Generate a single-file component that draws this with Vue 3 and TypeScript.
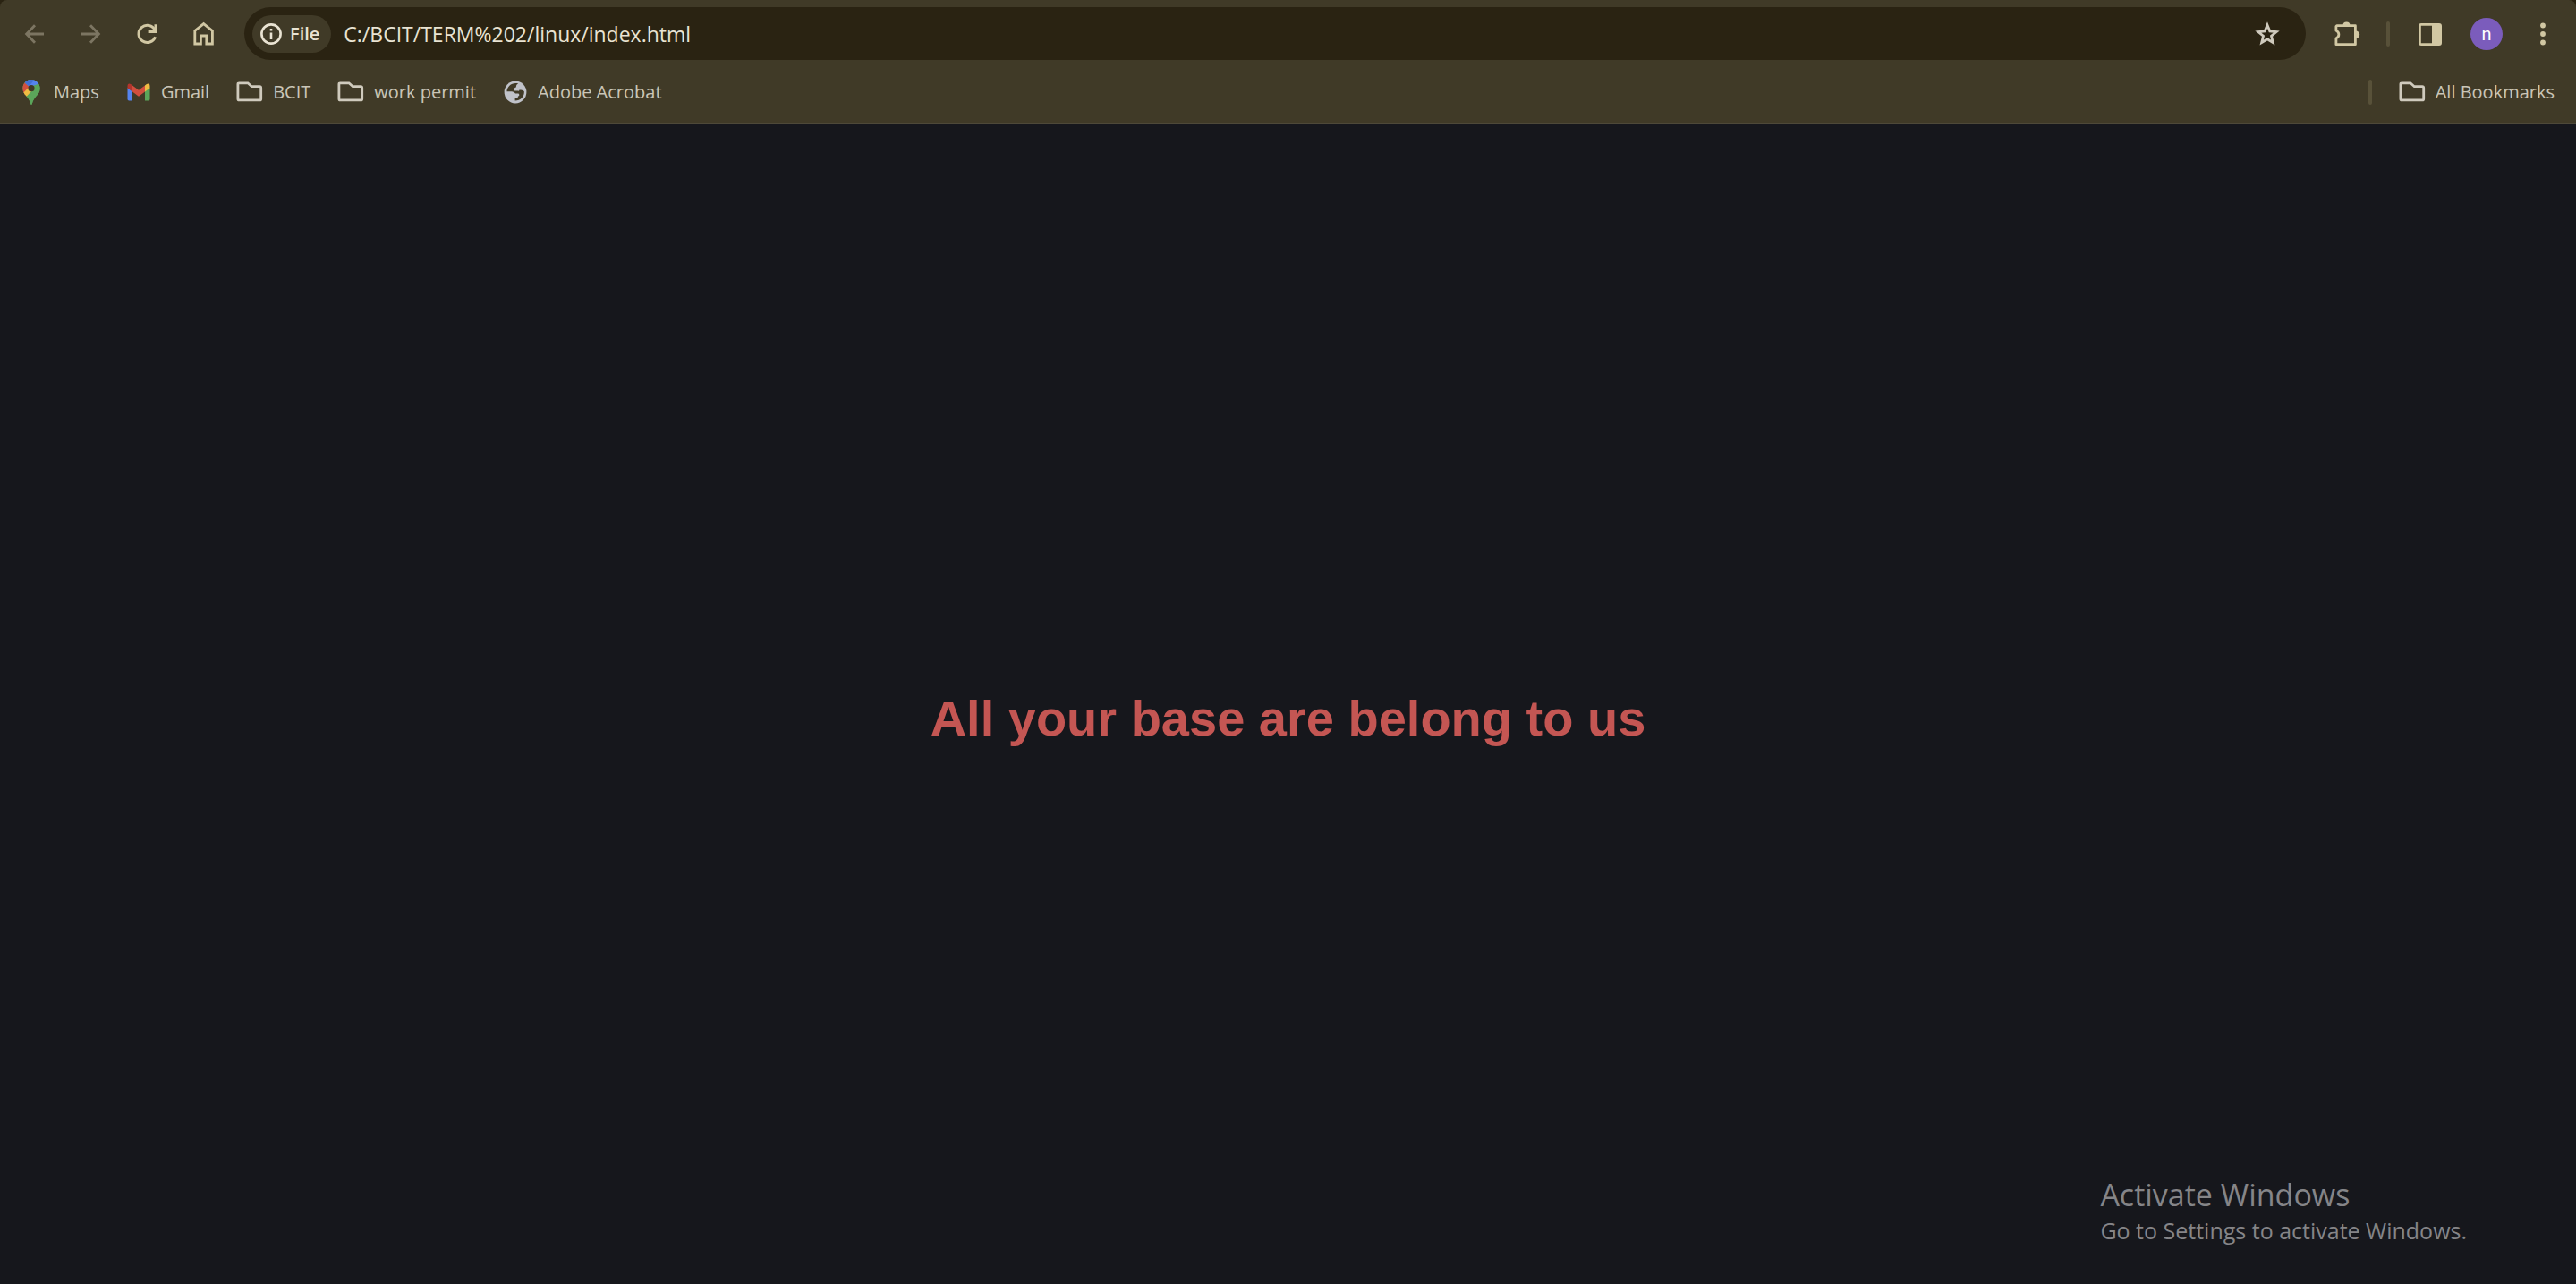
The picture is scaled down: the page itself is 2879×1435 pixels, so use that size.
<script setup lang="ts">
import { ref } from 'vue'

type IconKind = 'maps' | 'gmail' | 'folder' | 'globe'

interface Bookmark {
  label: string
  icon: IconKind
}

const address = ref('C:/BCIT/TERM%202/linux/index.html')

const bookmarks: Bookmark[] = [
  { label: 'Maps', icon: 'maps' },
  { label: 'Gmail', icon: 'gmail' },
  { label: 'BCIT', icon: 'folder' },
  { label: 'work permit', icon: 'folder' },
  { label: 'Adobe Acrobat', icon: 'globe' },
]
</script>

<template>
  <div class="window">
    <header class="chrome">
      <div class="toolbar">
        <button class="tool dim" type="button" aria-label="Back" disabled>
          <svg width="36" height="36" viewBox="0 0 36 36" fill="none" stroke="currentColor" stroke-width="2.8">
            <path d="M28 18H9M18 8.2L8.6 18L18 27.8" />
          </svg>
        </button>
        <button class="tool dim" type="button" aria-label="Forward" disabled>
          <svg width="36" height="36" viewBox="0 0 36 36" fill="none" stroke="currentColor" stroke-width="2.8">
            <path d="M7 18H27M17 8.2L26.4 18L17 27.8" />
          </svg>
        </button>
        <button class="tool" type="button" aria-label="Reload">
          <svg width="36" height="36" viewBox="0 0 36 36" fill="none" stroke="currentColor" stroke-width="3">
            <path d="M26.6 21.2A9.6 9.6 0 1 1 26.2 13.6" />
            <path d="M27 7.2V15.6H18.6" />
          </svg>
        </button>
        <button class="tool" type="button" aria-label="Home">
          <svg width="36" height="36" viewBox="0 0 36 36" fill="none" stroke="currentColor" stroke-width="2.8">
            <path d="M7.8 29V14.4L17.6 6.6L27.4 14.4V29H20.8V20H14.4V29Z" />
          </svg>
        </button>

        <div class="omnibox">
          <button class="chip" type="button">
            <svg width="24" height="24" viewBox="0 0 24 24" fill="none" stroke="currentColor">
              <circle cx="12" cy="12" r="10.6" stroke-width="2.6" />
              <path d="M12 10.4V18M12 6V8.6" stroke-width="2.6" />
            </svg>
            <span>File</span>
          </button>
          <input v-model="address" class="address" type="text" aria-label="Address" spellcheck="false" />
          <button class="star" type="button" aria-label="Bookmark this page">
            <svg width="30" height="30" viewBox="0 0 30 30" fill="none" stroke="currentColor" stroke-width="2.8">
              <path d="M15 5L17.8 11.9L25.2 12.5L19.5 17.3L21.3 24.6L15 20.7L8.7 24.6L10.5 17.3L4.8 12.5L12.2 11.9Z" />
            </svg>
          </button>
        </div>

        <button class="tool" type="button" aria-label="Extensions">
          <svg width="36" height="36" viewBox="0 0 36 36">
            <path
              d="M7.6 8.7H28.4V29.7H6.9V22.8A4.6 4.6 0 0 0 6.9 14.2V9.4Z"
              fill="none" stroke="currentColor" stroke-width="2.8" stroke-linejoin="round"
            />
            <path d="M14.5 8.4a4 4 0 0 1 8 0ZM29 14.6a4.2 4.2 0 0 1 0 8.4Z" fill="currentColor" />
          </svg>
        </button>
        <span class="divider"></span>
        <button class="tool" type="button" aria-label="Side panel">
          <svg width="36" height="36" viewBox="0 0 36 36">
            <rect x="6.4" y="7.4" width="23.2" height="22.2" rx="1.6" fill="none" stroke="currentColor" stroke-width="2.8" />
            <path d="M20 7h9v23h-9z" fill="currentColor" />
          </svg>
        </button>
        <button class="avatar" type="button" aria-label="Profile">n</button>
        <button class="tool" type="button" aria-label="Menu">
          <svg width="36" height="36" viewBox="0 0 36 36" fill="currentColor">
            <circle cx="18" cy="8.5" r="2.9" />
            <circle cx="18" cy="18" r="2.9" />
            <circle cx="18" cy="27.5" r="2.9" />
          </svg>
        </button>
      </div>

      <nav class="bookmarks" aria-label="Bookmarks">
        <a v-for="item in bookmarks" :key="item.label" class="bookmark" href="#">
          <svg v-if="item.icon === 'maps'" width="28" height="28" viewBox="0 0 28 28">
            <clipPath id="pin">
              <path d="M14 0C8.4 0 4.4 4.3 4.4 9.7C4.4 13.5 6.3 16 8.6 18.6C11 21.3 12.2 23.6 13 26.5Q14 29.3 15 26.5C15.8 23.6 17 21.3 19.4 18.6C21.7 16 23.6 13.5 23.6 9.7C23.6 4.3 19.6 0 14 0Z" />
            </clipPath>
            <g clip-path="url(#pin)">
              <path d="M0 0h28v28H0z" fill="#5ba55a" />
              <path d="M6.7 3.5L14 9.7L4 20H0V0Z" fill="#d24f3f" />
              <path d="M12 7.5L4.4 15.5L8.6 19.5L18 9.7Z" fill="#efbc43" />
              <path d="M22.3 4.5L8.4 19L13 28H28V0Z" fill="#5ba55a" />
              <path d="M6.7 3.5L12 8L22.5 4.7L18 0H9Z" fill="#5583ee" />
              <path d="M6.7 3.5L11.5 7.5L17.5 0H9Z" fill="#4470d3" />
            </g>
            <circle cx="14" cy="9.7" r="3.6" fill="#403a27" />
          </svg>
          <svg v-else-if="item.icon === 'gmail'" width="28" height="28" viewBox="0 0 28 28">
            <path d="M1.5 9L7 13V23.5H3.2Q1.5 23.5 1.5 21.8Z" fill="#5583ee" />
            <path d="M26.5 9L21 13V23.5H24.8Q26.5 23.5 26.5 21.8Z" fill="#5ba55a" />
            <path d="M21 6.4L22.5 5.2Q26.5 3.2 26.5 7.5V9.5L21 13.5Z" fill="#efbc43" />
            <path d="M7 6.4L5.5 5.2Q1.5 3.2 1.5 7.5V9.5L7 13.5Z" fill="#b3352c" />
            <path d="M7 6.4L14 11.8L21 6.4V13.5L14 18.8L7 13.5Z" fill="#d24f3f" />
          </svg>
          <svg v-else-if="item.icon === 'folder'" width="30" height="28" viewBox="0 0 30 28">
            <path
              d="M1.9 5Q1.9 3.8 3.1 3.8H13L17.3 7.7H26.2Q27.7 7.7 27.7 9.2V21.4Q27.7 22.9 26.2 22.9H3.4Q1.9 22.9 1.9 21.4Z"
              fill="none" stroke="#cfcabd" stroke-width="2.8"
            />
          </svg>
          <svg v-else width="28" height="28" viewBox="0 0 28 28">
            <circle cx="14" cy="14" r="12.4" fill="#c0c2c9" />
            <path
              d="M17.3 4.5C14.8 5.4 15 7.2 14.8 8.4C12.6 8.8 12.2 10.8 13 12.6H17Q18.4 12.8 18.4 11.4H20.2Q22.4 11.4 23.8 13C24.4 18.6 19.8 23.6 13.6 23.6V20.6H15.6Q17 20.4 17 18.6C18.6 18.4 18.8 16.2 17.4 15.4H10.6V13.4H4.4C4.6 7.5 10.6 2.6 17.3 4.5Z"
              fill="#403a27"
            />
            <path d="M4 13.4H10.6Q13.8 13.6 14 16.6H11.4V19.4H8.6L4.6 17Z" fill="#c0c2c9" />
          </svg>
          <span>{{ item.label }}</span>
        </a>

        <span class="divider push"></span>
        <a class="bookmark" href="#">
          <svg width="30" height="28" viewBox="0 0 30 28">
            <path
              d="M1.9 5Q1.9 3.8 3.1 3.8H13L17.3 7.7H26.2Q27.7 7.7 27.7 9.2V21.4Q27.7 22.9 26.2 22.9H3.4Q1.9 22.9 1.9 21.4Z"
              fill="none" stroke="#cfcabd" stroke-width="2.8"
            />
          </svg>
          <span>All Bookmarks</span>
        </a>
      </nav>
    </header>

    <main class="page">
      <h1>All your base are belong to us</h1>
    </main>

    <aside class="watermark">
      <p class="watermark-title">Activate Windows</p>
      <p class="watermark-text">Go to Settings to activate Windows.</p>
    </aside>
  </div>
</template>

<style>
body {
  margin: 0;
  background: #16171c;
}
</style>

<style scoped>
.window {
  position: relative;
  display: flex;
  flex-direction: column;
  min-height: 100vh;
  background: #16171c;
  font-family: "Open Sans", "Noto Sans", sans-serif;
}

button {
  padding: 0;
  border: 0;
  background: none;
  color: inherit;
  font-family: inherit;
}

svg {
  display: block;
  flex: none;
}

.chrome {
  background: linear-gradient(#2a2312, #2a2312) top / 100% 8px no-repeat;
}

.toolbar {
  display: flex;
  align-items: center;
  gap: 27px;
  height: 75px;
  padding: 0 19px 0 21px;
  border-radius: 8px 8px 0 0;
  background: #403a27;
  color: #d1c7a3;
}

.tool {
  flex: none;
  width: 36px;
  height: 36px;
}

.dim {
  color: #7c7562;
}

.omnibox {
  display: flex;
  flex: 1;
  align-items: center;
  box-sizing: border-box;
  height: 59px;
  padding: 0 28px 0 9px;
  border-radius: 30px;
  background: #2a2312;
  color: #e9e3d3;
}

.chip {
  display: flex;
  flex: none;
  align-items: center;
  gap: 9px;
  height: 42px;
  padding: 0 13px 0 9px;
  border-radius: 21px;
  background: #403a27;
  font-size: 20px;
  font-weight: 600;
  line-height: 42px;
}

.address {
  flex: 1;
  min-width: 0;
  height: 42px;
  margin-left: 14px;
  padding: 0;
  border: 0;
  outline: 0;
  background: none;
  color: inherit;
  font-family: inherit;
  font-size: 23px;
}

.star {
  color: #cfcabd;
}

.divider {
  flex: none;
  width: 4px;
  height: 28px;
  border-radius: 2px;
  background: #585139;
}

.avatar {
  flex: none;
  width: 36px;
  height: 36px;
  border-radius: 50%;
  background: #7b5cbc;
  color: #fff;
  font-family: Roboto, sans-serif;
  font-size: 20px;
  line-height: 36px;
}

.bookmarks {
  display: flex;
  align-items: center;
  gap: 30px;
  height: 63px;
  padding: 0 24px 0 21px;
  border-bottom: 1px solid #4e4939;
  background: #403a27;
}

.bookmark {
  display: flex;
  align-items: center;
  gap: 11px;
  margin-bottom: 8px;
  color: #cbc6b8;
  font-size: 20px;
  line-height: 28px;
  text-decoration: none;
}

.push {
  margin: 0 0 8px auto;
}

.page {
  display: flex;
  flex: 1;
  align-items: center;
  justify-content: center;
  padding-top: 32px;
}

h1 {
  margin: 0;
  color: #c45653;
  font-family: "Liberation Sans", Arial, sans-serif;
  font-size: 56px;
  font-weight: 700;
  line-height: 64px;
}

.watermark {
  position: absolute;
  right: 122px;
  bottom: 42px;
  color: #858588;
}

.watermark p {
  margin: 0;
}

.watermark-title {
  font-size: 34px;
  line-height: 44px;
}

.watermark-text {
  font-size: 25px;
  line-height: 36px;
}
</style>
